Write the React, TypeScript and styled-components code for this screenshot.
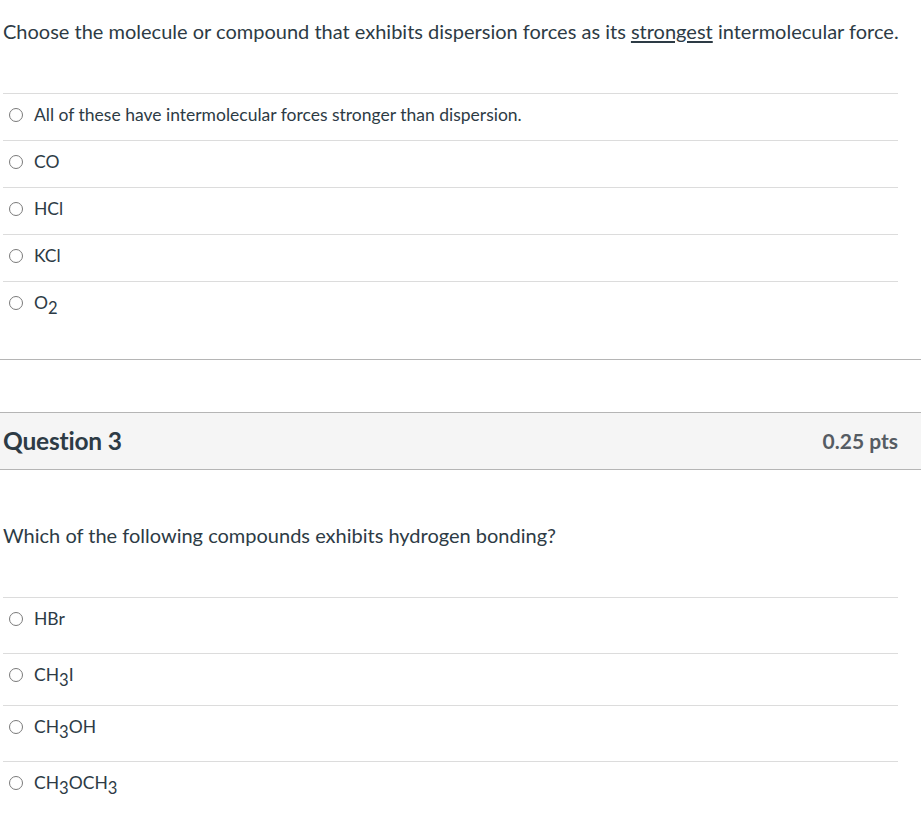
import React from "react";
import styled, { createGlobalStyle } from "styled-components";

const GlobalStyle = createGlobalStyle`
  html, body {
    margin: 0;
    padding: 0;
    background: #fff;
  }
  body {
    font-family: Lato, "Liberation Sans", sans-serif;
    color: #2d3b45;
  }
`;

const Page = styled.div`
  width: 921px;
`;

const QuestionBlock = styled.section<{ $divider?: boolean }>`
  border-bottom: ${({ $divider }) => ($divider ? "1px solid #b5b5b5" : "none")};
  padding-bottom: ${({ $divider }) => ($divider ? "31px" : "0")};
`;

const QuestionText = styled.p`
  margin: 0;
  padding-left: 3px;
  font-size: 20px;
  line-height: 26px;

  u {
    text-underline-offset: 2px;
  }
`;

const AnswerList = styled.div<{ $gap: number }>`
  margin: ${({ $gap }) => $gap}px 23px 0 3px;
`;

const AnswerRow = styled.label<{ $h: number; $top: number }>`
  display: flex;
  align-items: flex-start;
  gap: 11px;
  box-sizing: border-box;
  height: ${({ $h }) => $h}px;
  padding: ${({ $top }) => $top}px 0 0 6px;
  border-top: 1px solid #dcdcdc;
  font-size: 17.5px;
  line-height: 24px;
`;

const Radio = styled.span`
  flex: none;
  width: 14px;
  height: 14px;
  margin-top: 5px;
  box-sizing: border-box;
  border: 1.3px solid #7a7a7a;
  border-radius: 50%;
`;

const AnswerLabel = styled.span`
  sub {
    font-size: 0.95em;
    line-height: 0;
    vertical-align: -0.32em;
  }
`;

const Header = styled.header`
  display: flex;
  justify-content: space-between;
  align-items: center;
  box-sizing: border-box;
  height: 58px;
  margin-top: 52px;
  padding: 0 23px 2px 3px;
  background: #f5f5f5;
  border-top: 1px solid #b5b5b5;
  border-bottom: 1px solid #b5b5b5;
`;

const HeaderTitle = styled.h2`
  margin: 0;
  font-size: 24.5px;
  font-weight: 700;
  letter-spacing: -0.2px;
  color: #2d3b45;
`;

const Points = styled.span`
  font-size: 21px;
  font-weight: 700;
  color: #555c63;
`;

const Q1Text = styled(QuestionText)`
  padding-top: 18px;
`;

const Q2Text = styled(QuestionText)`
  margin-top: 52px;
`;

const q1Answers: React.ReactNode[] = [
  "All of these have intermolecular forces stronger than dispersion.",
  "CO",
  "HCl",
  "KCl",
  <>
    O<sub>2</sub>
  </>,
];

const q2Answers: { label: React.ReactNode; h: number }[] = [
  { label: "HBr", h: 56 },
  {
    label: (
      <>
        CH<sub>3</sub>I
      </>
    ),
    h: 52,
  },
  {
    label: (
      <>
        CH<sub>3</sub>OH
      </>
    ),
    h: 56,
  },
  {
    label: (
      <>
        CH<sub>3</sub>OCH<sub>3</sub>
      </>
    ),
    h: 56,
  },
];

export default function App() {
  return (
    <Page>
      <GlobalStyle />
      <QuestionBlock $divider>
        <Q1Text>
          Choose the molecule or compound that exhibits dispersion forces as its{" "}
          <u>strongest</u> intermolecular force.
        </Q1Text>
        <AnswerList $gap={49}>
          {q1Answers.map((a, i) => (
            <AnswerRow key={i} $h={47} $top={9}>
              <Radio />
              <AnswerLabel>{a}</AnswerLabel>
            </AnswerRow>
          ))}
        </AnswerList>
      </QuestionBlock>

      <Header>
        <HeaderTitle>Question 3</HeaderTitle>
        <Points>0.25 pts</Points>
      </Header>

      <QuestionBlock>
        <Q2Text>Which of the following compounds exhibits hydrogen bonding?</Q2Text>
        <AnswerList $gap={49}>
          {q2Answers.map((a, i) => (
            <AnswerRow key={i} $h={a.h} $top={9}>
              <Radio />
              <AnswerLabel>{a.label}</AnswerLabel>
            </AnswerRow>
          ))}
        </AnswerList>
      </QuestionBlock>
    </Page>
  );
}
